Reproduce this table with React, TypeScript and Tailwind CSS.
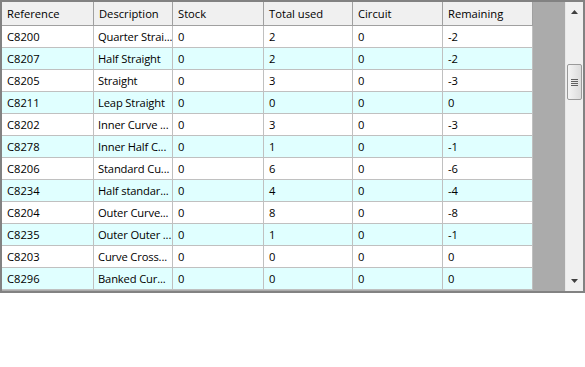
import React from "react";

const cols = [
  { name: "Reference", w: 92 },
  { name: "Description", w: 79 },
  { name: "Stock", w: 91 },
  { name: "Total used", w: 89 },
  { name: "Circuit", w: 90 },
  { name: "Remaining", w: 90 },
];

const rows: string[][] = [
  ["C8200", "Quarter Strai...", "0", "2", "0", "-2"],
  ["C8207", "Half Straight", "0", "2", "0", "-2"],
  ["C8205", "Straight", "0", "3", "0", "-3"],
  ["C8211", "Leap Straight", "0", "0", "0", "0"],
  ["C8202", "Inner Curve ...", "0", "3", "0", "-3"],
  ["C8278", "Inner Half C...", "0", "1", "0", "-1"],
  ["C8206", "Standard Cu...", "0", "6", "0", "-6"],
  ["C8234", "Half standar...", "0", "4", "0", "-4"],
  ["C8204", "Outer Curve...", "0", "8", "0", "-8"],
  ["C8235", "Outer Outer ...", "0", "1", "0", "-1"],
  ["C8203", "Curve Cross...", "0", "0", "0", "0"],
  ["C8296", "Banked Cur...", "0", "0", "0", "0"],
];

export default function App() {
  return (
    <div
      className="w-[585px] h-[367px] bg-white text-[11.2px] text-black"
      style={{ fontFamily: '"Open Sans", "Noto Sans", sans-serif' }}
    >
      <div className="w-[585px] h-[293px] border-2 border-[#828282] flex bg-[#ababab] overflow-hidden">
        <div className="flex-1 flex flex-col">
          <div className="flex h-[24px] w-[531px] bg-[#f0f0f0] border-b border-[#a0a0a0]">
            {cols.map((c, i) => (
              <div
                key={i}
                style={{ width: c.w }}
                className="h-full border-r border-[#a0a0a0] pl-[5px] flex items-center leading-none whitespace-nowrap"
              >
                {c.name}
              </div>
            ))}
          </div>
          {rows.map((r, ri) => (
            <div
              key={ri}
              className={`flex h-[22px] border-b border-[#c0c0c0] w-[531px] ${
                ri % 2 === 0 ? "bg-white" : "bg-[#e0ffff]"
              }`}
            >
              {r.map((v, ci) => (
                <div
                  key={ci}
                  style={{ width: cols[ci].w }}
                  className={`h-full border-r border-[#c0c0c0] flex items-center leading-none whitespace-nowrap overflow-hidden ${
                    ci === 1 ? "pl-[4px] tracking-[-0.15px]" : "pl-[5px]"
                  }`}
                >
                  {v}
                </div>
              ))}
            </div>
          ))}
        </div>
        <div className="w-[18px] h-full bg-[#f0f0f0] flex flex-col items-center border-l border-[#e8e8e8]">
          <div className="h-[20px] w-full flex items-center justify-center">
            <svg width="7" height="4" viewBox="0 0 7 4">
              <path d="M3.5 0 L7 4 L0 4 Z" fill="#404040" />
            </svg>
          </div>
          <div className="h-[42px]" />
          <div className="w-[15px] h-[36px] rounded-[2px] border border-[#9a9a9a] bg-gradient-to-r from-[#f4f4f4] to-[#dcdcdc] flex flex-col items-center justify-center gap-[1px]">
            <div className="w-[7px] h-[1px] bg-[#606060]" />
            <div className="w-[7px] h-[1px] bg-[#606060]" />
            <div className="w-[7px] h-[1px] bg-[#606060]" />
            <div className="w-[7px] h-[1px] bg-[#606060]" />
          </div>
          <div className="flex-1" />
          <div className="h-[21px] w-full flex items-center justify-center">
            <svg width="7" height="4" viewBox="0 0 7 4">
              <path d="M0 0 L7 0 L3.5 4 Z" fill="#404040" />
            </svg>
          </div>
        </div>
      </div>
    </div>
  );
}
